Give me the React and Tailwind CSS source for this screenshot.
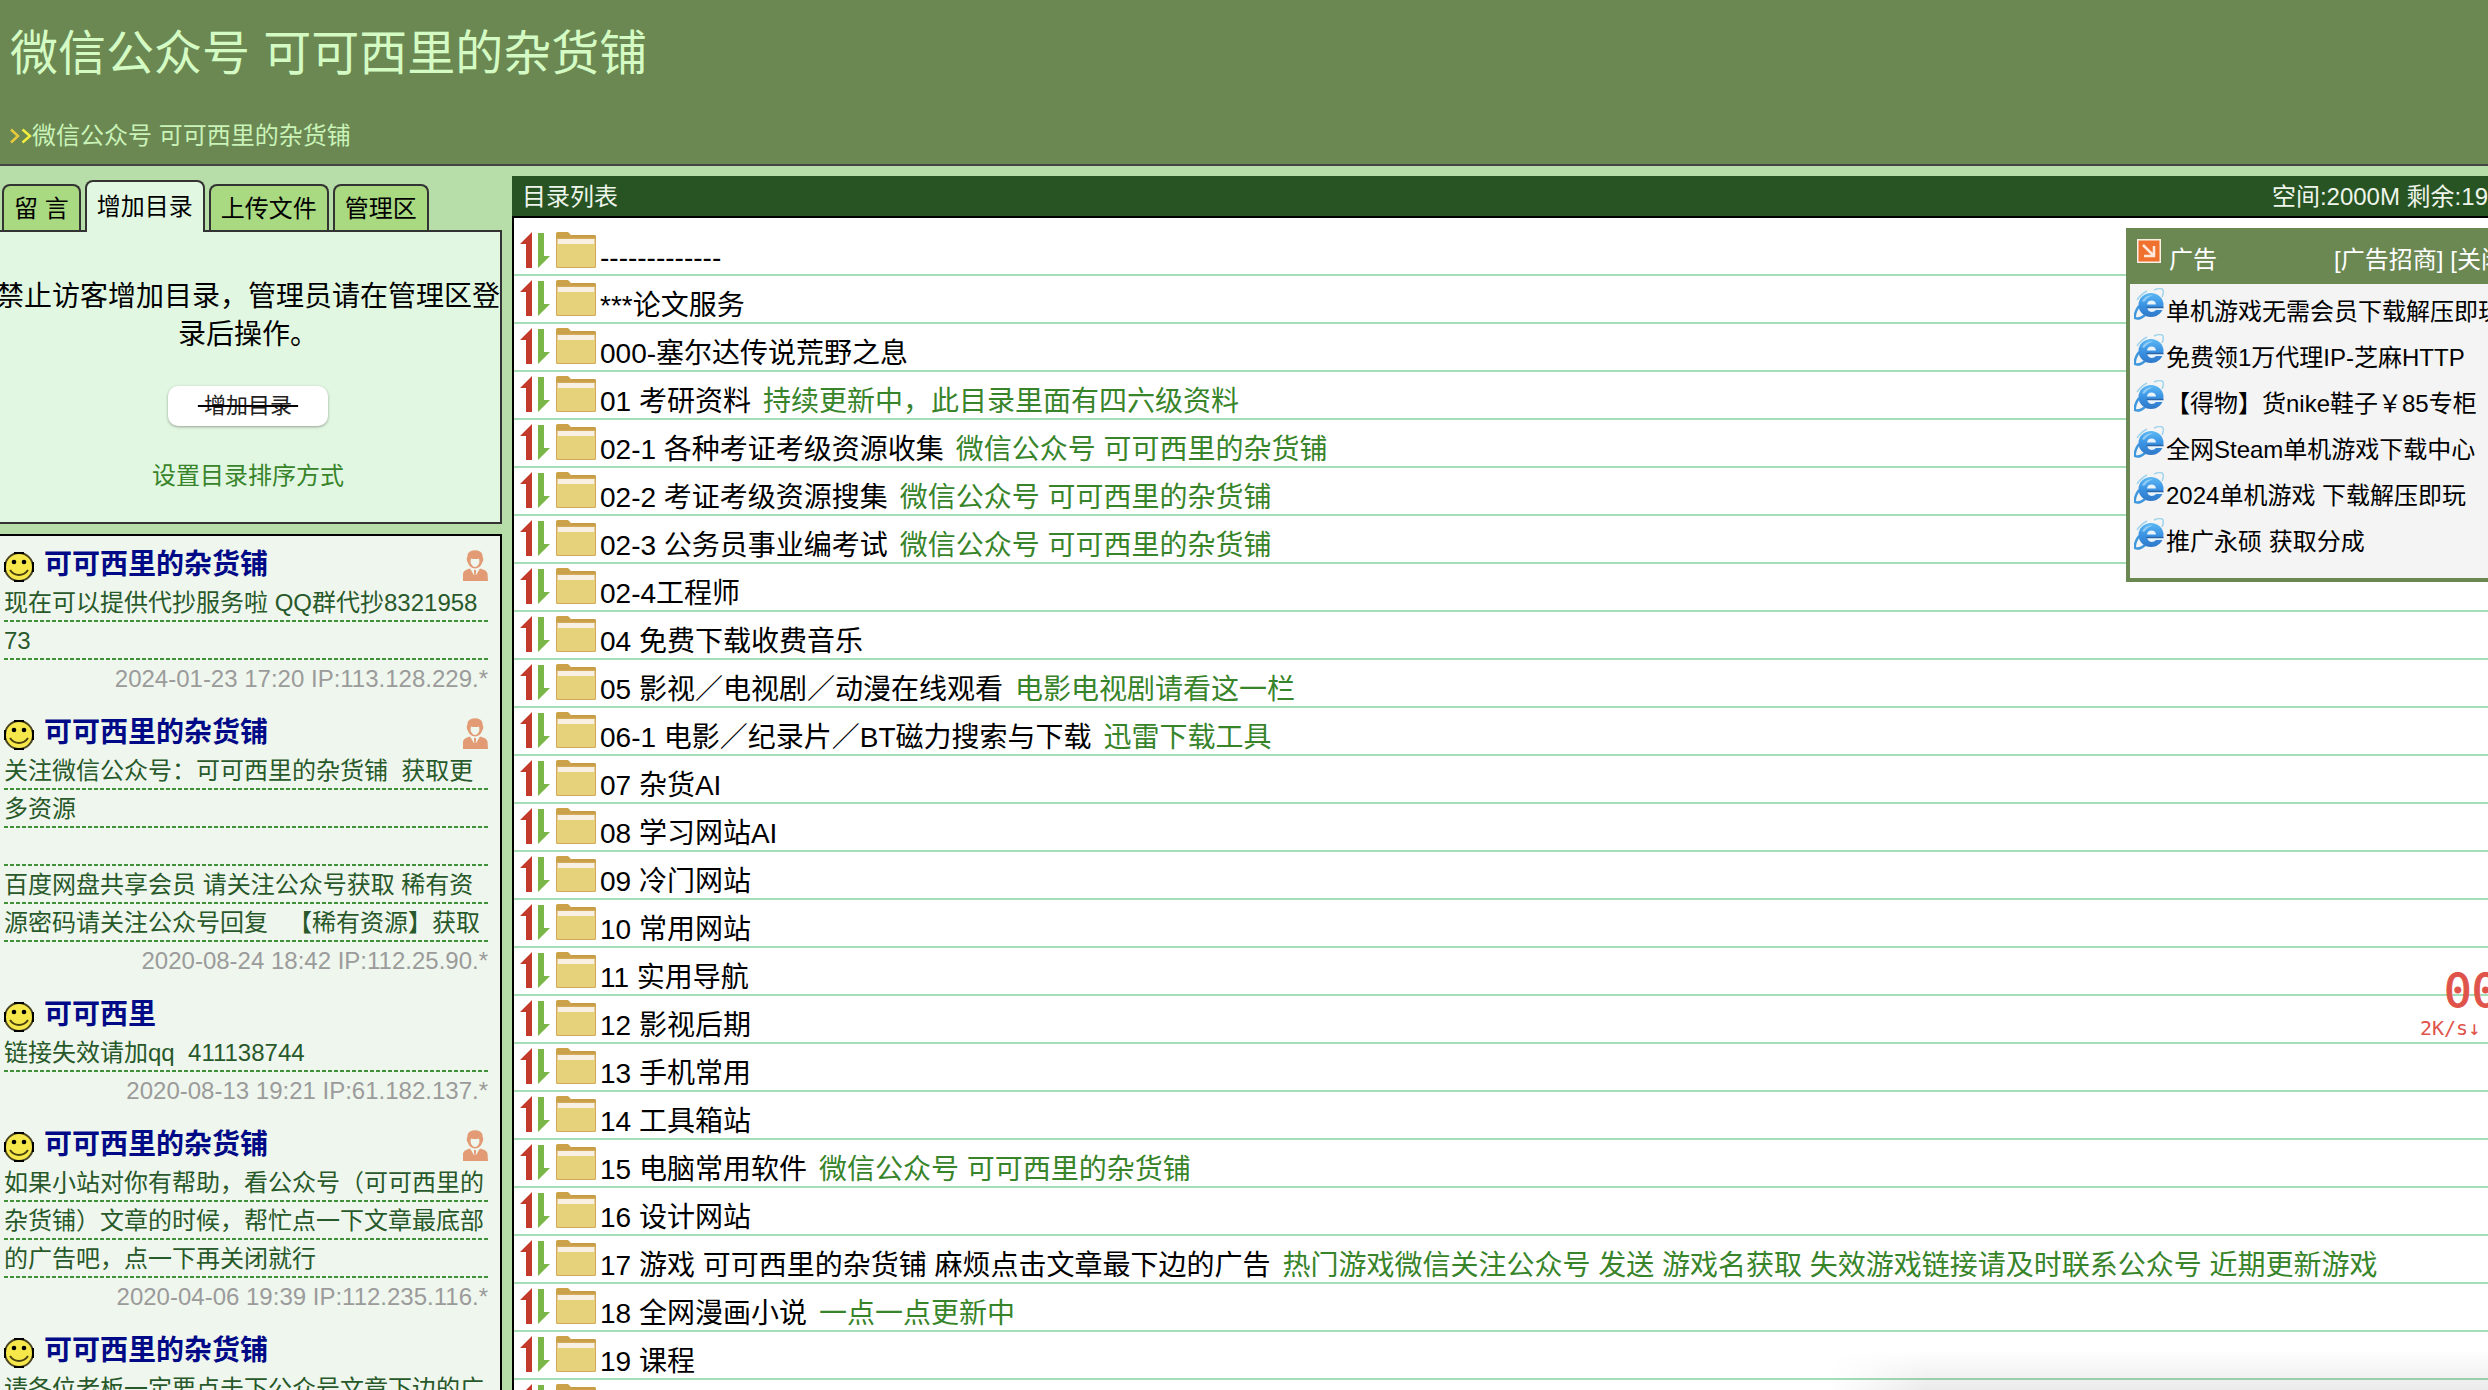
const SITE = "微信公众号 可可西里的杂货铺";

const TABS = ["留 言", "增加目录", "上传文件", "管理区"];
const ACTIVE_TAB = "增加目录";

const MESSAGES = [
  {
    name: "可可西里的杂货铺",
    owner: true,
    lines: ["现在可以提供代抄服务啦 QQ群代抄8321958", "73"],
    meta: "2024-01-23 17:20 IP:113.128.229.*",
  },
  {
    name: "可可西里的杂货铺",
    owner: true,
    lines: [
      "关注微信公众号：可可西里的杂货铺  获取更",
      "多资源",
      "",
      "百度网盘共享会员 请关注公众号获取 稀有资",
      "源密码请关注公众号回复   【稀有资源】获取",
    ],
    meta: "2020-08-24 18:42 IP:112.25.90.*",
  },
  {
    name: "可可西里",
    owner: false,
    lines: ["链接失效请加qq  411138744"],
    meta: "2020-08-13 19:21 IP:61.182.137.*",
  },
  {
    name: "可可西里的杂货铺",
    owner: true,
    lines: [
      "如果小站对你有帮助，看公众号（可可西里的",
      "杂货铺）文章的时候，帮忙点一下文章最底部",
      "的广告吧，点一下再关闭就行",
    ],
    meta: "2020-04-06 19:39 IP:112.235.116.*",
  },
  {
    name: "可可西里的杂货铺",
    owner: false,
    lines: ["请各位老板一定要点击下公众号文章下边的广"],
    meta: "",
  },
];

const FOLDERS = [
  ["-------------"],
  ["***论文服务"],
  ["000-塞尔达传说荒野之息"],
  ["01 考研资料", "持续更新中，此目录里面有四六级资料"],
  ["02-1 各种考证考级资源收集", SITE],
  ["02-2 考证考级资源搜集", SITE],
  ["02-3 公务员事业编考试", SITE],
  ["02-4工程师"],
  ["04 免费下载收费音乐"],
  ["05 影视／电视剧／动漫在线观看", "电影电视剧请看这一栏"],
  ["06-1 电影／纪录片／BT磁力搜索与下载", "迅雷下载工具"],
  ["07 杂货AI"],
  ["08 学习网站AI"],
  ["09 冷门网站"],
  ["10 常用网站"],
  ["11 实用导航"],
  ["12 影视后期"],
  ["13 手机常用"],
  ["14 工具箱站"],
  ["15 电脑常用软件", SITE],
  ["16 设计网站"],
  [
    "17 游戏 可可西里的杂货铺 麻烦点击文章最下边的广告",
    "热门游戏微信关注公众号 发送 游戏名获取 失效游戏链接请及时联系公众号 近期更新游戏",
  ],
  ["18 全网漫画小说", "一点一点更新中"],
  ["19 课程"],
  [""],
];

const ADS = [
  "单机游戏无需会员下载解压即玩",
  "免费领1万代理IP-芝麻HTTP",
  "【得物】货nike鞋子￥85专柜",
  "全网Steam单机游戏下载中心",
  "2024单机游戏 下载解压即玩",
  "推广永硕 获取分成",
];

function Smiley() {
  return (
    <svg viewBox="0 0 30 30" className="mt-0.5 size-[30px] shrink-0" aria-hidden="true">
      <circle cx="15" cy="15" r="14" fill="#f6e84b" stroke="#4a4521" strokeWidth="2" />
      <path d="M10 1h10M10 29h10M1 10v10M29 10v10" stroke="#000" strokeWidth="2" />
      <circle cx="10" cy="10" r="2.300" fill="#000" />
      <circle cx="20" cy="10" r="2.300" fill="#000" />
      <path d="M6 18c2 3 5 5 9 5s7-2 9-5" fill="none" stroke="#4a4010" strokeWidth="2" />
    </svg>
  );
}

function Owner() {
  return (
    <svg viewBox="0 0 26 31" className="h-[31px] w-[26px]" aria-hidden="true">
      <path
        fill="#e39b75"
        fillRule="evenodd"
        d="M8 1.500Q13-.8 18 1.500Q21 3 20.500 6.500Q22 9 20.500 12Q18.500 18 13 18.500Q7.500 18 5.500 12Q4 9 5.500 6.500Q5 3 8 1.500ZM9 8.500Q8 13 9.500 14.500Q11 17 13 17Q15 17 16.500 14.500Q18 13 17 8.500Q13 9.500 9 8.500Z"
      />
      <path
        fill="#e39b75"
        d="M1 31V23.500Q1.500 20 8 18.500L12 25V20H14V25L18 18.500Q25 20 25.500 23.500L26 31Z"
      />
      <path d="M10 19L12 24.500M16 19L14 24.500" stroke="#eff6ed" strokeWidth="1" />
    </svg>
  );
}

function SortArrows() {
  return (
    <svg viewBox="0 0 30 36" className="h-9 w-[30px]" aria-hidden="true">
      <path fill="#c33a2c" d="M12 0V36H6V12H0Z" />
      <path fill="#7ab648" d="M18 1H24V24H30L18 36Z" />
    </svg>
  );
}

function Folder() {
  return (
    <svg viewBox="0 0 40 36" className="h-9 w-10" aria-hidden="true">
      <path fill="#cba24a" d="M0 1.500Q0 0 1.500 0H12L15 3H38.500Q40 3 40 4.500V10H0Z" />
      <path fill="#c4953f" d="M15 3H39L40 5H16Z" opacity=".5" />
      <rect x="0" y="6" width="40" height="30" rx="1.500" fill="#d2aa59" />
      <rect x="1.500" y="7" width="37" height="5" fill="#f8f1e3" />
      <rect x="1" y="12" width="38" height="23" rx="1" fill="#e6d27a" />
    </svg>
  );
}

function Explorer() {
  return (
    <svg viewBox="0 0 30 32" className="h-8 w-[30px] shrink-0" aria-hidden="true">
      <defs>
        <linearGradient id="ieBlue" x1="0" y1="0" x2="0" y2="1">
          <stop offset="0" stopColor="#5cb8f4" />
          <stop offset="0.5" stopColor="#3b93e3" />
          <stop offset="1" stopColor="#2f78c9" />
        </linearGradient>
      </defs>
      <path
        d="M20 2Q27-1 29 2Q30 5 28 9M3 12Q7 6 13 3"
        fill="none"
        stroke="#a3d4ec"
        strokeWidth="1.500"
      />
      <path
        d="M5 18Q0 25 1 30Q5 32 11 27"
        fill="none"
        stroke="#3f97dd"
        strokeWidth="2.500"
      />
      <ellipse cx="17" cy="17" rx="12.500" ry="12" fill="url(#ieBlue)" />
      <path d="M8 13Q11 7 19 7Q14 9 10 14Z" fill="#a9dcfa" opacity=".7" />
      <path d="M13 16.500Q13.500 12.500 17.500 12.500Q21.500 12.500 22 16.500Z" fill="#e9f3fb" />
      <path d="M13 19.500H30V22H22Q20.500 24 17.500 24Q14 23.500 13 19.500Z" fill="#e9f3fb" />
      <path d="M12.500 19.500H29.500" stroke="#2c64a8" strokeWidth="1.500" />
    </svg>
  );
}

function Header() {
  return (
    <header className="flex shrink-0 flex-col border-b-2 border-[#444444] bg-[#6b8853] pt-[26px] pb-2.5 pl-2.5">
      <h1 className="text-5xl leading-[56px] text-[#d4fbc3]">{SITE}</h1>
      <a href="#home" className="mt-9 flex items-center text-2xl leading-9 text-[#c9f3b7]">
        <svg viewBox="0 0 22 16" className="h-4 w-[22px]" aria-hidden="true">
          <path d="M1 1.500L8 8L1 14.500" fill="none" stroke="#e8c83c" strokeWidth="2.500" />
          <path d="M12.500 1.500L20 8L12.500 14.500" fill="none" stroke="#f2ee3e" strokeWidth="2.500" />
        </svg>
        {SITE}
      </a>
    </header>
  );
}

function Sidebar() {
  return (
    <aside className="-ml-1 flex w-[506px] shrink-0 flex-col">
      <nav className="flex shrink-0 items-end gap-1 pt-1 pl-1.5 text-2xl" role="tablist">
        {TABS.map((tab) =>
          tab === ACTIVE_TAB ? (
            <button
              key={tab}
              type="button"
              role="tab"
              aria-selected="true"
              className="relative -mb-0.5 h-[52px] rounded-t-lg border-2 border-b-0 border-[#333333] bg-[#e2f7e2] px-2.5 text-black"
            >
              {tab}
            </button>
          ) : (
            <button
              key={tab}
              type="button"
              role="tab"
              aria-selected="false"
              className="h-[46px] rounded-t-lg border-2 border-b-0 border-[#333333] bg-[#a9d981] px-2.5 pt-0.5 text-black"
            >
              {tab}
            </button>
          ),
        )}
      </nav>

      <section className="flex shrink-0 flex-col items-center border-2 border-l-0 border-[#333333] bg-[#e2f7e2] pt-[46px] pb-7">
        <p className="text-center text-[28px] leading-[38px] break-all text-black">
          禁止访客增加目录，管理员请在管理区登
          <br />
          录后操作。
        </p>
        <button
          type="button"
          className="mt-8 h-10 w-40 rounded-[10px] bg-white text-[22px] leading-10 whitespace-pre text-[#222222] line-through decoration-black decoration-2 shadow-[0_1px_3px_rgba(0,0,0,0.35)]"
        >
          {"\u00a0增加目录\u00a0"}
        </button>
        <a href="#sort" className="mt-8 text-2xl leading-9 text-[#38842a]">
          设置目录排序方式
        </a>
      </section>

      <section className="mt-2.5 flex grow flex-col gap-5 border-2 border-b-0 border-l-0 border-black bg-[#eff6ed] pt-3.5 pr-3 pl-2">
        {MESSAGES.map((m, i) => (
          <article key={i} className="flex flex-col">
            <div className="flex h-[34px] items-start">
              <Smiley />
              <h2 className="ml-2.5 grow text-[28px] leading-[30px] font-bold text-[#000a87]">{m.name}</h2>
              {m.owner && <Owner />}
            </div>
            {m.lines.map((line, j) => (
              <p
                key={j}
                className="h-[38px] bg-[linear-gradient(90deg,#41913a_0_4px,transparent_4px_6px)] bg-[length:6px_2px] bg-bottom-left bg-repeat-x text-2xl leading-[38px] whitespace-pre text-[#28592a]"
              >
                {line}
              </p>
            ))}
            <p className="text-right text-2xl leading-[38px] text-[#9b9b9b]">{m.meta}</p>
          </article>
        ))}
      </section>
    </aside>
  );
}

function Directory() {
  return (
    <main className="flex min-w-0 grow flex-col">
      <div className="flex h-10 shrink-0 items-center justify-between bg-[#285424] pt-0.5 pl-2.5 text-2xl text-[#eef5ea]">
        <h2>目录列表</h2>
        <span className="whitespace-nowrap">空间:2000M 剩余:19</span>
      </div>
      <ul className="grow border-t-2 border-l-2 border-black bg-white pt-2.5">
        {FOLDERS.map(([name, note], i) => (
          <li key={i} className="flex h-12 border-b-2 border-[#a3deb7] pl-1.5">
            <a href={`#dir-${i}`} className="flex text-[28px] leading-9 whitespace-nowrap text-black">
              <span className="mt-1 mr-1 flex gap-1.5">
                <SortArrows />
                <Folder />
              </span>
              <span className="mt-3">{name}</span>
            </a>
            {note && (
              <span className="mt-3 ml-3 text-[28px] leading-9 whitespace-nowrap text-[#38842a]">{note}</span>
            )}
          </li>
        ))}
      </ul>
    </main>
  );
}

function AdBox() {
  return (
    <aside className="absolute top-[228px] right-0 w-[362px] overflow-hidden border-4 border-r-0 border-[#6b8853] bg-[#f4f4f4] pb-[18px] text-2xl whitespace-nowrap">
      <div className="flex h-[52px] items-start bg-[#6b8853] pl-[7px] text-white">
        <svg viewBox="0 0 24 24" className="mt-[7px] size-6 shrink-0" aria-hidden="true">
          <rect width="24" height="24" fill="#fbeee4" />
          <rect x="1.500" y="1.500" width="21" height="21" fill="#f0702e" />
          <path d="M6 6L16 16M17 7V17H7" fill="none" stroke="#fce9dc" strokeWidth="2.500" />
        </svg>
        <h2 className="mt-2.5 ml-2 leading-9">广告</h2>
        <div className="mt-2.5 ml-[117px] flex gap-[7px] leading-9">
          <a href="#promote">[广告招商]</a>
          <button type="button">[关闭]</button>
        </div>
      </div>
      <ul>
        {ADS.map((ad) => (
          <li key={ad} className="h-[46px]">
            <a href="#ad" className="flex items-start pt-1 pl-1 text-black">
              <Explorer />
              <span className="mt-1.5 ml-0.5 leading-9">{ad}</span>
            </a>
          </li>
        ))}
      </ul>
    </aside>
  );
}

function NetMeter() {
  return (
    <div className="absolute top-[964px] right-0 w-[68px] overflow-hidden font-['DejaVu_Sans_Mono',monospace] whitespace-nowrap text-[#e0534a]">
      <div className="pl-6 text-[46px] leading-[54px] [-webkit-text-stroke:1px_#e0534a]">00</div>
      <div className="text-[20px] leading-5">2K/s↓</div>
    </div>
  );
}

export default function App() {
  return (
    <div
      lang="zh-CN"
      className="relative flex h-screen flex-col overflow-hidden bg-[#b7dda9] font-['Liberation_Sans','Noto_Sans_CJK_SC',sans-serif] [text-spacing-trim:space-all]"
    >
      <Header />
      <div className="flex min-h-0 grow gap-2.5 pt-2.5">
        <Sidebar />
        <Directory />
      </div>
      <AdBox />
      <NetMeter />
      <div className="pointer-events-none absolute right-0 bottom-0 h-10 w-[660px] bg-linear-to-t from-black/8 to-transparent mask-l-from-85%" />
    </div>
  );
}
